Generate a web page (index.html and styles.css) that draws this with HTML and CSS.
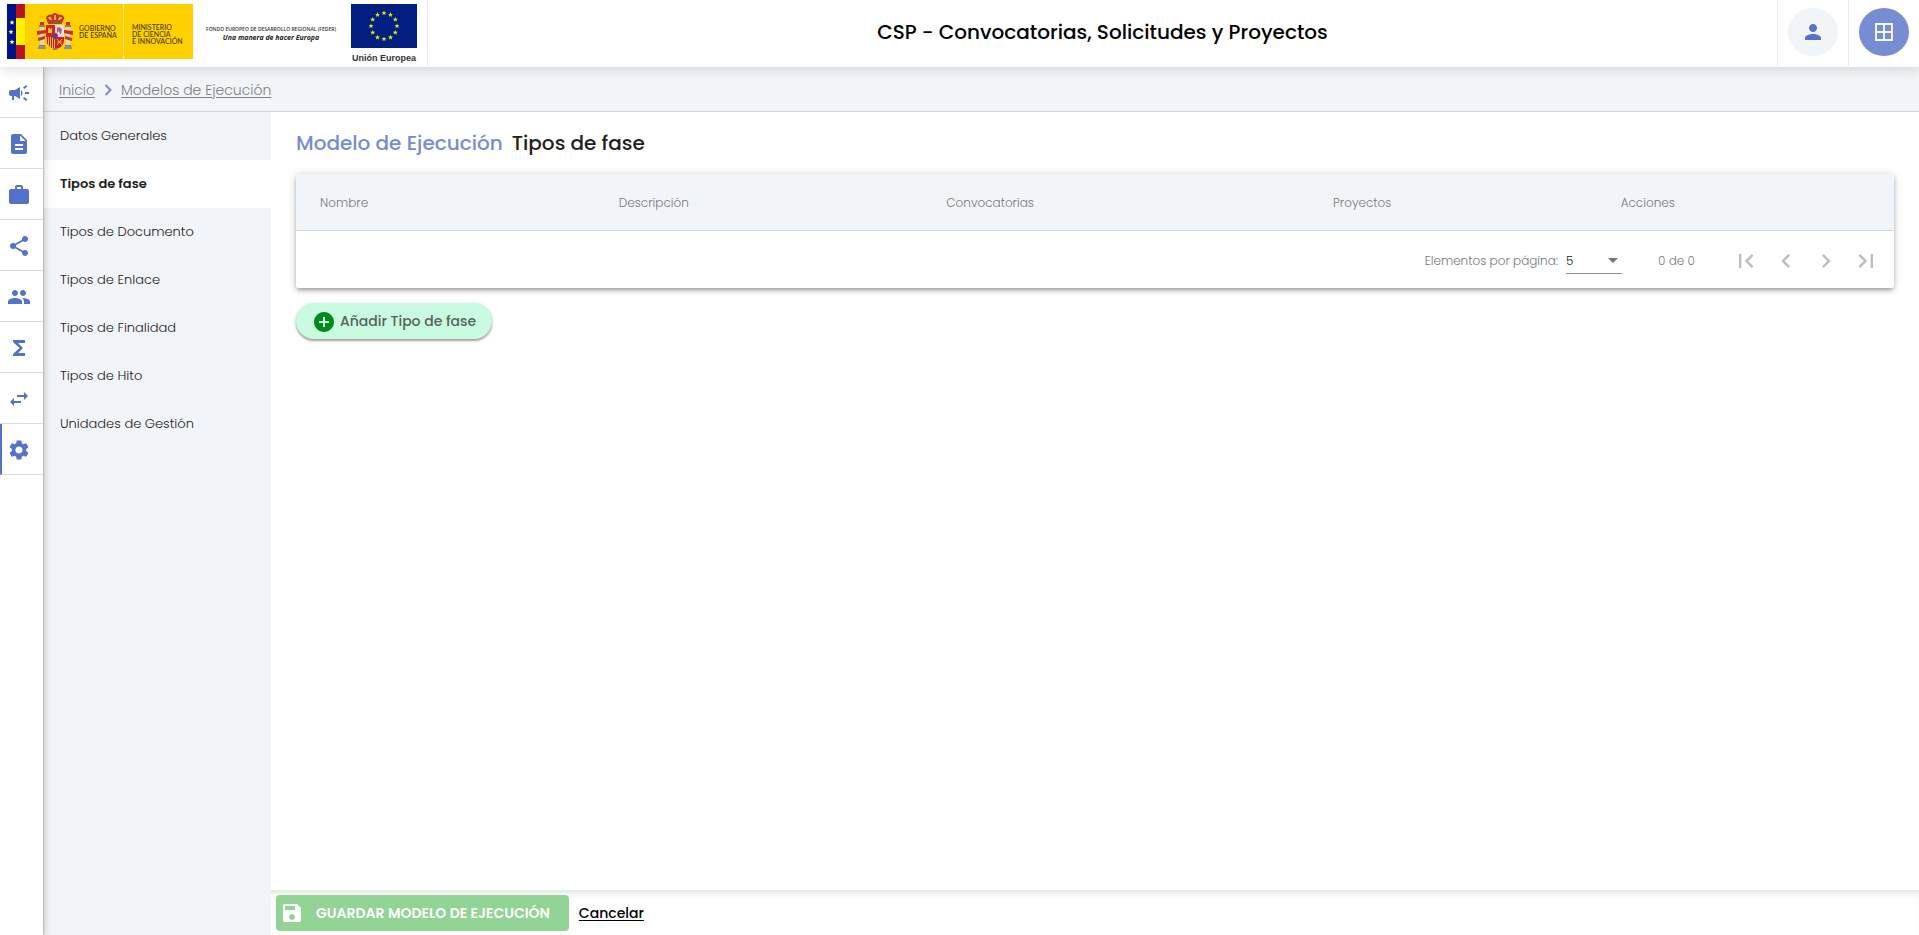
FILE: index.html
```html
<!DOCTYPE html>
<html lang="es">
<head>
<meta charset="utf-8">
<title>CSP - Convocatorias, Solicitudes y Proyectos</title>
<link rel="stylesheet" href="styles.css">
</head>
<body>
<header class="topbar">
  <div class="logos">
    <div class="gov">
      <svg class="gov-flags" viewBox="0 0 18 55" aria-hidden="true">
        <path fill="#00128a" d="M0 0h9v55H0z"/>
        <path fill="#b81317" d="M9 0h9v55H9z"/>
        <path fill="#fff000" d="M9 14h9v27H9z"/>
        <path fill="#fff6a0" d="M5 16l.7 1.6 1.7.1-1.3 1.2.4 1.7L5 19.700l-1.500.9.4-1.700-1.300-1.200 1.700-.1zM4 25.500l.7 1.600 1.700.1-1.300 1.200.4 1.700L4 29.200l-1.500.9.4-1.700-1.300-1.200 1.700-.1zM5 35.500l.7 1.600 1.700.1-1.300 1.200.4 1.700L5 39.200l-1.500.9.4-1.700-1.300-1.200 1.700-.1z"/>
      </svg>
      <svg class="gov-arms" viewBox="0 0 36 38" role="img" aria-label="Escudo de España">
        <path fill="#c8372d" d="M9 5q1-4 6-3.500L17 0h2l2 1.500Q26 1 27.500 5L25 10H11z"/>
        <path fill="#e9b33b" d="M11 5q1-2 3-1l1 3h-2zM17 2h2v5h-2zM22 4q3-1 3 1l-2 2h-2z"/>
        <path fill="#8f5a24" d="M11 9h14v2H11z"/>
        <path fill="#dcd6c6" d="M3 14h4v18H3zM29 14h4v18h-4z"/>
        <path fill="#9f7a45" d="M2 12h6v2H2zM28 12h6v2h-6zM2 32h6v2H2zM28 32h6v2h-6z"/>
        <path fill="#c62f2a" d="M3 9h4v3H3zM29 9h4v3h-4zM0 18l9-1v3l-9 2zM27 17l9 1v4l-9-2zM1 25l7-2v3l-7 2zM28 23l7 2v3l-7-2z"/>
        <path fill="#8794a8" d="M1 34q4-2 8 0v2H1zM27 34q4-2 8 0v2h-8z"/>
        <path fill="#d81f26" d="M9 12h9v12H9z"/>
        <path fill="#f0bf2e" d="M12 15h1v1h1v-1h1v5h-4v-5h1z"/>
        <path fill="#f0dfe2" d="M18 12h9v12h-9z"/>
        <path fill="#b45583" d="M20 15l2-1 3 2-1 5h-1l-1-3-2 2z"/>
        <path fill="#e4b82b" d="M9 24h9v12q-8-1-9-8z"/>
        <path fill="#c8202b" d="M10 24h1v7h-1zM12 24h1v9h-1zM14 24h1v11h-1zM16 24h1v12h-1zM18 24h9v4q-1 7-9 8z"/>
        <path fill="none" stroke="#ddb13b" d="M20 26l5 6M25 26l-5 6M20 29h5"/>
        <ellipse cx="18" cy="23" rx="2.500" ry="3" fill="#304f9c" stroke="#c7322a"/>
        <path fill="#7d8570" d="M16 35h4v2h-4z"/>
      </svg>
      <p class="gov-name">GOBIERNO<br>DE ESPAÑA</p>
      <p class="gov-ministry">MINISTERIO<br>DE CIENCIA<br>E INNOVACIÓN</p>
    </div>
    <p class="feder">FONDO EUROPEO DE DESARROLLO REGIONAL (FEDER)<br><em>Una manera de hacer Europa</em></p>
    <div class="eu">
      <svg class="eu-flag" viewBox="0 0 66 44" aria-hidden="true">
        <defs><path id="star" d="M0-2.600.7-.8H2.500L1.100.4 1.600 2.200 0 1.100-1.600 2.200-1.100.4-2.500-.8H-.7z"/></defs>
        <path fill="#001f80" d="M0 0h66v44H0z"/>
        <g fill="#e8e617">
          <use href="#star" x="33" y="9"/><use href="#star" x="39.500" y="10.700"/><use href="#star" x="44.300" y="15.500"/>
          <use href="#star" x="46" y="22"/><use href="#star" x="44.300" y="28.500"/><use href="#star" x="39.500" y="33.300"/>
          <use href="#star" x="33" y="35"/><use href="#star" x="26.500" y="33.300"/><use href="#star" x="21.700" y="28.500"/>
          <use href="#star" x="20" y="22"/><use href="#star" x="21.700" y="15.500"/><use href="#star" x="26.500" y="10.700"/>
        </g>
      </svg>
      <span>Unión Europea</span>
    </div>
  </div>
  <h1 class="app-title">CSP - Convocatorias, Solicitudes y Proyectos</h1>
  <div class="topbar-action">
    <button class="round" type="button" aria-label="Usuario"><svg class="icon" viewBox="0 0 24 24"><path d="M12 12c2.210 0 4-1.790 4-4s-1.790-4-4-4-4 1.790-4 4 1.790 4 4 4zm0 2c-2.670 0-8 1.340-8 4v2h16v-2c0-2.660-5.330-4-8-4z"/></svg></button>
  </div>
  <div class="topbar-action">
    <button class="round round-primary" type="button" aria-label="Módulos"><svg class="icon" viewBox="0 0 24 24"><path d="M3 3v18h18V3H3zm8 16H5v-6h6v6zm0-8H5V5h6v6zm8 8h-6v-6h6v6zm0-8h-6V5h6v6z"/></svg></button>
  </div>
</header>

<div class="shell">
  <nav class="rail" aria-label="Menú principal">
    <a class="rail-item" href="#" aria-label="Convocatorias"><svg class="icon" viewBox="0 0 24 24"><path d="M18 11v2h4v-2h-4zm-2 6.610c.96.710 2.210 1.650 3.200 2.390.4-.530.8-1.070 1.200-1.600-.99-.740-2.240-1.680-3.200-2.400-.4.540-.8 1.080-1.200 1.610zM20.400 5.600c-.4-.530-.8-1.070-1.200-1.600-.99.740-2.240 1.680-3.200 2.400.4.530.8 1.070 1.200 1.600.96-.720 2.210-1.650 3.200-2.400zM4 9c-1.100 0-2 .9-2 2v2c0 1.100.9 2 2 2h1v4h2v-4h1l5 3V6L8 9H4zm11.500 3c0-1.330-.580-2.530-1.500-3.350v6.690c.92-.810 1.500-2.010 1.500-3.340z"/></svg></a>
    <a class="rail-item" href="#" aria-label="Solicitudes"><svg class="icon" viewBox="0 0 24 24"><path d="M14 2H6c-1.100 0-1.990.9-1.990 2L4 20c0 1.100.89 2 1.990 2H18c1.100 0 2-.9 2-2V8l-6-6zm2 16H8v-2h8v2zm0-4H8v-2h8v2zm-3-5V3.500L18.500 9H13z"/></svg></a>
    <a class="rail-item" href="#" aria-label="Proyectos"><svg class="icon" viewBox="0 0 24 24"><path d="M20 6h-4V4c0-1.110-.89-2-2-2h-4c-1.110 0-2 .89-2 2v2H4c-1.110 0-1.990.89-1.990 2L2 19c0 1.110.89 2 2 2h16c1.110 0 2-.89 2-2V8c0-1.110-.89-2-2-2zm-6 0h-4V4h4v2z"/></svg></a>
    <a class="rail-item" href="#" aria-label="Compartir"><svg class="icon" viewBox="0 0 24 24"><path d="M18 16.080c-.76 0-1.440.3-1.960.77L8.910 12.700c.05-.230.09-.460.09-.700s-.040-.470-.090-.700l7.050-4.110c.54.5 1.250.81 2.040.81 1.660 0 3-1.340 3-3s-1.340-3-3-3-3 1.340-3 3c0 .24.040.47.090.7L8.040 9.810C7.500 9.310 6.790 9 6 9c-1.660 0-3 1.340-3 3s1.340 3 3 3c.79 0 1.500-.31 2.040-.81l7.120 4.160c-.05.210-.08.430-.08.650 0 1.610 1.310 2.920 2.920 2.920s2.920-1.310 2.920-2.920-1.310-2.920-2.920-2.920z"/></svg></a>
    <a class="rail-item" href="#" aria-label="Grupos"><svg class="icon" viewBox="0 0 24 24"><path d="M16 11c1.660 0 2.990-1.340 2.990-3S17.660 5 16 5s-3 1.340-3 3 1.340 3 3 3zm-8 0c1.660 0 2.990-1.340 2.990-3S9.660 5 8 5 5 6.340 5 8s1.340 3 3 3zm0 2c-2.330 0-7 1.170-7 3.500V19h14v-2.500C15 14.170 10.330 13 8 13zm8 0c-.29 0-.62.020-.97.050 1.160.84 1.970 1.970 1.970 3.450V19h6v-2.500c0-2.330-4.670-3.500-7-3.500z"/></svg></a>
    <a class="rail-item" href="#" aria-label="Totales"><svg class="icon" viewBox="0 0 24 24"><path d="M18 4H6v2l6.500 6L6 18v2h12v-3h-7l5-5-5-5h7z"/></svg></a>
    <a class="rail-item" href="#" aria-label="Intercambios"><svg class="icon" viewBox="0 0 24 24"><path d="M6.990 11L3 15l3.990 4v-3H14v-2H6.990v-3zM21 9l-3.990-4v3H10v2h7.010v3L21 9z"/></svg></a>
    <a class="rail-item rail-active" href="#" aria-label="Configuración"><svg class="icon" viewBox="0 0 24 24"><path d="M19.140 12.940c.040-.300.060-.610.060-.940 0-.320-.020-.640-.070-.940l2.030-1.580c.180-.140.230-.410.120-.610l-1.920-3.320c-.120-.220-.370-.290-.590-.220l-2.390.96c-.500-.380-1.030-.700-1.620-.940l-.360-2.540c-.040-.240-.240-.410-.480-.410h-3.840c-.240 0-.430.170-.470.410l-.360 2.540c-.590.240-1.130.570-1.620.94l-2.390-.96c-.220-.080-.470 0-.590.220L2.740 8.870c-.120.210-.080.470.120.610l2.030 1.580c-.050.300-.090.630-.090.940s.020.640.070.94l-2.030 1.580c-.180.140-.230.410-.120.610l1.920 3.320c.120.220.370.290.590.22l2.390-.96c.500.380 1.030.700 1.620.94l.360 2.540c.050.240.240.410.480.410h3.840c.240 0 .440-.170.470-.410l.360-2.540c.590-.240 1.130-.560 1.620-.940l2.390.96c.220.080.470 0 .590-.220l1.920-3.320c.120-.220.070-.470-.120-.610l-2.010-1.580zM12 15.600c-1.980 0-3.600-1.620-3.600-3.600s1.620-3.600 3.600-3.600 3.600 1.620 3.600 3.600-1.620 3.600-3.600 3.600z"/></svg></a>
  </nav>

  <div class="page">
    <nav class="breadcrumb" aria-label="Ruta">
      <a href="#">Inicio</a>
      <svg class="crumb-sep" viewBox="0 0 8 12" aria-hidden="true"><path d="M1.500 1l5 5-5 5"/></svg>
      <a href="#">Modelos de Ejecución</a>
    </nav>
    <div class="workspace">
      <nav class="sidenav" aria-label="Secciones">
        <a href="#">Datos Generales</a>
        <a href="#" class="current">Tipos de fase</a>
        <a href="#">Tipos de Documento</a>
        <a href="#">Tipos de Enlace</a>
        <a href="#">Tipos de Finalidad</a>
        <a href="#">Tipos de Hito</a>
        <a href="#">Unidades de Gestión</a>
      </nav>
      <div class="content">
        <main class="main">
          <h2 class="heading"><span class="heading-model">Modelo de Ejecución</span><span>Tipos de fase</span></h2>
          <section class="card">
            <table class="grid">
              <colgroup><col class="c-name"><col class="c-desc"><col class="c-conv"><col class="c-proj"><col></colgroup>
              <thead><tr><th>Nombre</th><th>Descripción</th><th>Convocatorias</th><th>Proyectos</th><th>Acciones</th></tr></thead>
            </table>
            <div class="paginator">
              <label for="size">Elementos por página:</label>
              <div class="size">
                <select id="size"><option>5</option><option>10</option><option>25</option></select>
                <svg class="caret" viewBox="0 0 10 5" aria-hidden="true"><path d="M0 0h10L5 5z"/></svg>
              </div>
              <span class="range">0 de 0</span>
              <div class="pager">
                <button type="button" disabled aria-label="Primera página"><svg viewBox="0 0 24 24"><path d="M18.410 16.590L13.820 12l4.590-4.590L17 6l-6 6 6 6zM6 6h2v12H6z"/></svg></button>
                <button type="button" disabled aria-label="Página anterior"><svg viewBox="0 0 24 24"><path d="M15.410 7.410L14 6l-6 6 6 6 1.410-1.410L10.830 12z"/></svg></button>
                <button type="button" disabled aria-label="Página siguiente"><svg viewBox="0 0 24 24"><path d="M10 6L8.590 7.410 13.170 12l-4.580 4.590L10 18l6-6z"/></svg></button>
                <button type="button" disabled aria-label="Última página"><svg viewBox="0 0 24 24"><path d="M5.590 7.410L10.180 12l-4.590 4.590L7 18l6-6-6-6zM16 6h2v12h-2z"/></svg></button>
              </div>
            </div>
          </section>
          <button class="add" type="button"><svg class="icon" viewBox="0 0 24 24"><path d="M12 2C6.480 2 2 6.480 2 12s4.480 10 10 10 10-4.480 10-10S17.520 2 12 2zm5 11h-4v4h-2v-4H7v-2h4V7h2v4h4v2z"/></svg>Añadir Tipo de fase</button>
        </main>
        <footer class="actions">
          <button class="save" type="button" disabled><svg class="icon" viewBox="0 0 24 24"><path d="M17 3H5c-1.110 0-2 .9-2 2v14c0 1.100.89 2 2 2h14c1.100 0 2-.9 2-2V7l-4-4zm-5 16c-1.660 0-3-1.340-3-3s1.340-3 3-3 3 1.340 3 3-1.340 3-3 3zm3-10H5V5h10v4z"/></svg><span>GUARDAR MODELO DE EJECUCIÓN</span></button>
          <a class="cancel" href="#">Cancelar</a>
        </footer>
      </div>
    </div>
  </div>
</div>
</body>
</html>
```

FILE: styles.css
```css
:root {
  --primary: #5471cb;
  --primary-soft: #768cd3;
  --surface: #f1f5f8;
  --line: #d3d7dc;
  --muted: #77797c;
}

* { box-sizing: border-box; }

body {
  margin: 0;
  min-height: 100vh;
  display: flex;
  flex-direction: column;
  font-family: Poppins, Inter, "Open Sans", sans-serif;
  font-size: 14px;
  color: #212121;
  background: #fff;
}

p, h1, h2 { margin: 0; }
button, select { font: inherit; border: 0; padding: 0; }

.icon { width: 24px; height: 24px; fill: currentColor; flex: none; }

/* Top bar */
.topbar {
  position: relative;
  z-index: 3;
  display: flex;
  height: 67px;
  padding-bottom: 1px;
  background: #fff;
  box-shadow: 0 2px 12px rgba(0, 0, 0, .14);
}

.logos {
  display: flex;
  align-items: flex-start;
  width: 428px;
  padding: 4px 10px 0 7px;
  border-right: 1px solid #e9ebee;
}

.gov {
  display: flex;
  align-items: center;
  width: 186px;
  height: 55px;
  background: #ffd000;
  color: #483a04;
  font: 500 7px/7px Lato, sans-serif;
}
.gov-flags { width: 18px; height: 55px; }
.gov-arms { width: 36px; height: 38px; margin: 0 6px 0 12px; }
.gov-name { width: 44px; }
.gov-ministry {
  display: flex;
  align-items: center;
  flex: 1;
  height: 55px;
  padding: 6px 0 0 8px;
  border-left: 1px solid #ffe680;
}

.feder {
  width: 136px;
  margin: 22px 12px 0 10px;
  font: 600 5px/7px "Open Sans", sans-serif;
  color: #333;
  text-align: center;
  white-space: nowrap;
}
.feder em { font-size: 7px; line-height: 9px; font-weight: 700; color: #222; }

.eu {
  display: flex;
  flex-direction: column;
  align-items: center;
  gap: 4px;
  width: 66px;
  font: 700 9px/12px "Liberation Sans", Arial, sans-serif;
  color: #333;
  white-space: nowrap;
}
.eu-flag { width: 66px; height: 44px; }

.app-title {
  flex: 1;
  align-self: center;
  padding-bottom: 2px;
  text-align: center;
  font-size: 20px;
  line-height: 30px;
  font-weight: 500;
  color: #000;
}

.topbar-action {
  display: flex;
  align-items: center;
  padding: 0 10px 2px;
  border-left: 1px solid #e9ebee;
}
.round {
  display: grid;
  place-items: center;
  width: 50px;
  height: 48px;
  border-radius: 50%;
  background: var(--surface);
  color: var(--primary);
}
.round-primary { background: var(--primary-soft); color: var(--surface); }

/* Shell */
.shell { display: flex; flex: 1; }

.rail {
  position: relative;
  z-index: 2;
  width: 43px;
  background: #fff;
  box-shadow: 1px 0 1px rgba(0, 0, 0, .14), 2px 0 8px rgba(0, 0, 0, .16);
}
.rail-item {
  display: flex;
  align-items: center;
  height: 51px;
  padding: 1px 0 0 7px;
  border-bottom: 1px solid #dcdcdc;
  color: var(--primary);
}
.rail-active { padding-left: 5px; border-left: 2px solid var(--primary); }

.page { display: flex; flex-direction: column; flex: 1; }

.breadcrumb {
  display: flex;
  align-items: center;
  gap: 9px;
  height: 45px;
  padding: 2px 16px 0;
  background: var(--surface);
  border-bottom: 1px solid var(--line);
}
.breadcrumb a { color: #7f8184; text-underline-offset: 2px; font-weight: 300; }
.crumb-sep { width: 8px; height: 12px; fill: none; stroke: var(--primary-soft); stroke-width: 2; }

.workspace { display: flex; flex: 1; }

.sidenav { width: 228px; background: var(--surface); }
.sidenav a {
  display: flex;
  align-items: center;
  height: 48px;
  padding-left: 17px;
  color: #212121;
  font-size: 13px;
  font-weight: 300;
  text-decoration: none;
}
.sidenav .current { background: #fff; font-weight: 600; }

.content { display: flex; flex-direction: column; flex: 1; }
.main { flex: 1; padding: 16px 25px; }

.heading {
  display: flex;
  gap: 9px;
  margin-bottom: 16px;
  font-size: 20px;
  line-height: 30px;
  font-weight: 500;
}
.heading-model { color: var(--primary-soft); }

/* Table card */
.card {
  margin-bottom: 15px;
  border-radius: 2px;
  background: #fff;
  box-shadow: 0 3px 4px -1px rgba(0, 0, 0, .3), 0 1px 8px rgba(0, 0, 0, .2);
}
.grid { width: 100%; table-layout: fixed; border-collapse: collapse; }
.grid th {
  height: 56px;
  padding: 2px 0 0;
  background: var(--surface);
  border-bottom: 1px solid var(--line);
  color: var(--muted);
  font-size: 12px;
  font-weight: 300;
  text-align: left;
}
.grid th:first-child { padding-left: 24px; }
.c-name { width: 20.2%; }
.c-desc { width: 20.5%; }
.c-conv { width: 24.2%; }
.c-proj { width: 18%; }

.paginator {
  display: flex;
  align-items: center;
  justify-content: flex-end;
  height: 57px;
  padding: 4px 8px 0 0;
  color: var(--muted);
  font-size: 12px;
  font-weight: 300;
}
.size {
  position: relative;
  width: 56px;
  margin: 0 36px 0 8px;
  border-bottom: 1px solid #8c8c8c;
}
.size select {
  width: 100%;
  height: 25px;
  appearance: none;
  background: none;
  color: #212121;
}
.caret { position: absolute; right: 4px; top: 10px; width: 10px; height: 5px; fill: #757575; pointer-events: none; }
.range { width: 68px; }
.pager { display: flex; }
.pager button { display: grid; place-items: center; width: 40px; height: 40px; background: none; }
.pager svg { width: 28px; height: 28px; fill: #bdbdbd; }

.add {
  display: flex;
  align-items: center;
  gap: 4px;
  height: 36px;
  padding: 2px 16px 0;
  border-radius: 18px;
  background: #c8fbdf;
  color: #56645c;
  font-weight: 500;
  box-shadow: 0 2px 2px rgba(0, 0, 0, .3), 0 1px 4px rgba(0, 0, 0, .14);
}
.add .icon { color: #058b1c; }

/* Footer */
.actions {
  display: flex;
  align-items: center;
  gap: 10px;
  height: 45px;
  padding: 0 5px;
  box-shadow: inset 0 8px 8px -6px rgba(0, 0, 0, .14);
}
.save {
  display: flex;
  align-items: center;
  gap: 12px;
  height: 36px;
  padding: 1px 19px 0 4px;
  border-radius: 4px;
  background: #92d496;
  color: #fff;
  font-weight: 600;
}
.cancel { padding-top: 2px; color: #000; font-weight: 500; text-underline-offset: 2px; }
```
